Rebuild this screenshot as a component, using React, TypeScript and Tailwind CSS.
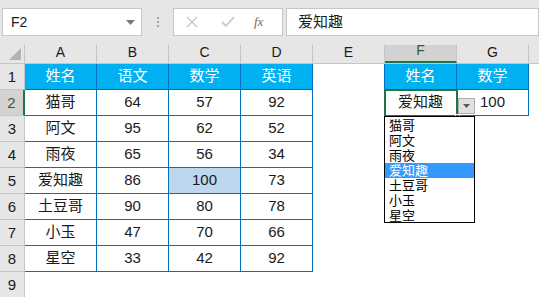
import { useState } from "react";

const cols = ["A", "B", "C", "D", "E", "F", "G"];

const rows: string[][] = [
  ["姓名", "语文", "数学", "英语"],
  ["猫哥", "64", "57", "92"],
  ["阿文", "95", "62", "52"],
  ["雨夜", "65", "56", "34"],
  ["爱知趣", "86", "100", "73"],
  ["土豆哥", "90", "80", "78"],
  ["小玉", "47", "70", "66"],
  ["星空", "33", "42", "92"],
];

const names = ["猫哥", "阿文", "雨夜", "爱知趣", "土豆哥", "小玉", "星空"];

function Cell({ r, c }: { r: number; c: number }) {
  // c: 0..6 -> A..G, r: 0..8 -> row 1..9
  let text = "";
  let cls = "";
  if (r < 8 && c < 4) {
    text = rows[r][c];
    cls = "border-r border-b border-[#0070c0]";
    if (r === 0) cls += " bg-[#00b0f0] text-white";
    if (r === 4 && c === 2) cls += " bg-[#bdd7ee]";
  } else if (r < 2 && (c === 5 || c === 6)) {
    if (r === 0) {
      text = c === 5 ? "姓名" : "数学";
      cls = "border-r border-b border-[#0070c0] bg-[#00b0f0] text-white";
    } else {
      text = c === 5 ? "爱知趣" : "100";
      cls = "border-r border-b border-[#0070c0]";
    }
    if (c === 5) cls += " border-l -ml-px w-[73px]";
  }
  return (
    <div
      className={`w-[72px] h-[26px] shrink-0 flex items-center justify-center text-[15px] ${cls}`}
    >
      {text}
    </div>
  );
}

export default function App() {
  const [open] = useState(true);
  return (
    <div className="relative w-[539px] h-[297px] overflow-hidden bg-white text-[#1a1a1a] font-['Liberation_Sans','Noto_Sans_CJK_SC',sans-serif]">
      {/* formula bar */}
      <div className="h-[45px] bg-[#e6e6e6] flex items-start pt-[8px] pl-[2px]">
        <div className="w-[140px] h-[28px] bg-white border border-[#c6c6c6] flex items-center justify-between pl-[8px] pr-[6px] text-[14px]">
          <span>F2</span>
          <svg width="9" height="5" viewBox="0 0 9 5">
            <path d="M0 0h9L4.5 5z" fill="#7a7a7a" />
          </svg>
        </div>
        <div className="w-[31px] h-[28px] flex flex-col items-center justify-center gap-[2px]">
          <span className="w-[2px] h-[2px] bg-[#a6a6a6]" />
          <span className="w-[2px] h-[2px] bg-[#a6a6a6]" />
          <span className="w-[2px] h-[2px] bg-[#a6a6a6]" />
        </div>
        <div className="w-[110px] h-[28px] bg-white border border-[#c6c6c6] flex items-center pl-[12px] gap-[23px]">
          <svg width="12" height="12" viewBox="0 0 12 12">
            <path d="M1 1l10 10M11 1L1 11" stroke="#c8c8c8" strokeWidth="1.4" />
          </svg>
          <svg width="14" height="12" viewBox="0 0 14 12">
            <path d="M1 6l4 4 8-9" stroke="#c8c8c8" strokeWidth="1.8" fill="none" />
          </svg>
          <span className="text-[13px] italic text-[#6e6e6e] font-['Liberation_Serif',serif] -ml-[4px]">
            fx
          </span>
        </div>
        <div className="ml-[3px] flex-1 h-[28px] bg-white border border-[#c6c6c6] flex items-center pl-[11px] text-[15px]">
          爱知趣
        </div>
      </div>

      {/* column headers */}
      <div className="flex h-[19px] bg-[#e6e6e6] border-b border-[#c6c6c6]">
        <div className="w-[25px] shrink-0 border-r border-[#c6c6c6] flex items-end justify-end pr-[3px] pb-[3px]">
          <svg width="12" height="12" viewBox="0 0 12 12">
            <path d="M12 0v12H0z" fill="#b4b4b4" />
          </svg>
        </div>
        {cols.map((c) => (
          <div
            key={c}
            className={`w-[72px] shrink-0 flex items-end justify-center text-[14px] border-r border-[#c6c6c6] ${
              c === "F"
                ? "bg-[#d2d2d2] text-[#3c5a2e] border-b-2 border-b-[#217346]"
                : ""
            }`}
          >
            {c}
          </div>
        ))}
        <div className="flex-1" />
      </div>

      {/* rows */}
      {Array.from({ length: 9 }).map((_, r) => (
        <div key={r} className="flex h-[26px]">
          <div
            className={`w-[25px] shrink-0 border-r border-b border-[#c6c6c6] flex items-end justify-center pb-[1px] text-[15px] ${
              r === 1
                ? "bg-[#d2d2d2] text-[#3c5a2e] border-r-2 border-r-[#217346]"
                : "bg-[#e6e6e6]"
            }`}
          >
            {r + 1}
          </div>
          {cols.map((_, c) => (
            <Cell key={c} r={r} c={c} />
          ))}
        </div>
      ))}

      {/* active cell F2 */}
      <div className="absolute left-[384px] top-[89px] w-[74px] h-[28px] border-2 border-[#217346] pointer-events-none" />
      <div className="absolute left-[455px] top-[114px] w-[5px] h-[5px] bg-[#217346] border border-white" />

      {/* validation dropdown button */}
      <div className="absolute left-[458px] top-[98px] w-[17px] h-[16px] bg-[#e1e1e1] border border-[#adadad] flex items-center justify-center">
        <svg width="7" height="4" viewBox="0 0 7 4">
          <path d="M0 0h7L3.5 4z" fill="#5a5a5a" />
        </svg>
      </div>

      {/* dropdown list */}
      {open && (
        <div className="absolute left-[384px] top-[116px] w-[91px] h-[107px] bg-white border border-black pt-[1px] text-[13px] leading-[15px]">
          {names.map((n) => (
            <div
              key={n}
              className={`h-[15px] pl-[4px] ${n === "爱知趣" ? "bg-[#3399ff] text-white" : "text-black"}`}
            >
              {n}
            </div>
          ))}
        </div>
      )}
    </div>
  );
}
